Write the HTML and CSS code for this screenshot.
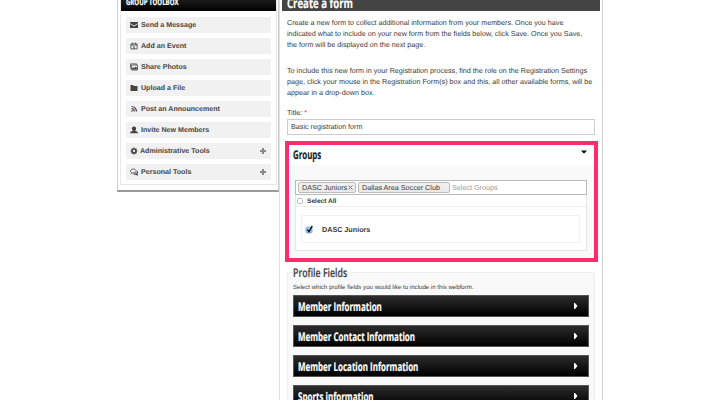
FILE: index.html
```html
<!DOCTYPE html>
<html lang="en">
<head>
<meta charset="utf-8">
<title>Create a form</title>
<link rel="stylesheet" href="styles.css">
</head>
<body>
<div class="page">
  <aside class="toolbox">
    <div class="toolbox-inner">
      <h2 class="toolbox-title"><span>GROUP TOOLBOX</span></h2>
      <ul class="tools">
        <li><svg viewBox="0 0 8 8"><path d="M0 1h8v1.2L4 4.6 0 2.2zM0 3l4 2.5L8 3v4H0z"/></svg><span>Send a Message</span></li>
        <li><svg viewBox="0 0 8 8"><path class="line" d="M.9 1.9h6.2v5H.9zM.9 3h6.2M2.5.6v1.5M5.5.6v1.5M3.3 4.2h.8v2.2M3.3 6.2h1.6"/></svg><span>Add an Event</span></li>
        <li><svg viewBox="0 0 8 8"><path class="line" d="M.4 5.5V.9h6.2v.8M1.4 2h6.2v5H1.4z"/><path d="M2 6.5V5.3l1.3-1 1 .8L5.8 3.6 7.1 5v1.5z"/></svg><span>Share Photos</span></li>
        <li><svg viewBox="0 0 8 8"><path d="M.5 1h2.6l.7 1h3.7v5h-7z"/></svg><span>Upload a File</span></li>
        <li><svg viewBox="0 0 8 8"><path class="thick" d="M1.5 1.5A5 5 0 0 1 6.5 6.5M1.5 3.7A2.8 2.8 0 0 1 4.3 6.5"/><circle cx="2" cy="6" r=".8"/></svg><span>Post an Announcement</span></li>
        <li><svg viewBox="0 0 8 8"><path d="M4 .4c1.600 0 2.200 1 2.100 2.300-.1 1-.5 1.500-.8 1.800v.5l2.300.8.3 1.500H.1l.3-1.500L2.700 5v-.5c-.3-.3-.7-.8-.8-1.800C1.800 1.400 2.400.4 4 .4z"/></svg><span>Invite New Members</span></li>
        <li class="more wide"><svg viewBox="0 0 8 8"><circle class="gear" cx="4" cy="4" r="2"/><path class="thick" d="M4 .6v1M4 6.400v1M.6 4h1M6.400 4h1M1.600 1.600l.7.7M5.700 5.700l.7.7M6.400 1.600l-.7.7M2.300 5.700l-.7.7"/></svg><span>Administrative Tools</span><i class="plus"></i></li>
        <li class="more"><svg viewBox="0 0 8 8"><path class="line" d="M3.300 1C1.500 1 .5 1.900.5 3c0 .7.4 1.200 1 1.600L1.200 5.600l1.500-.7c2 .2 3.500-.6 3.500-1.900C6.200 1.900 5 1 3.300 1z"/><path class="thick" d="M7 3.300c.9.9.5 1.900-.2 2.400l.4 1-1.400-.6c-.9.1-1.600 0-2.200-.4"/></svg><span>Personal Tools</span><i class="plus"></i></li>
      </ul>
    </div>
  </aside>

  <main class="content">
    <h1 class="content-title"><span>Create a form</span></h1>
    <div class="body">
      <p class="intro">Create a new form to collect additional information from your members. Once you have<br>indicated what to include on your new form from the fields below, click Save. Once you Save,<br>the form will be displayed on the next page.</p>
      <p class="intro second">To include this new form in your Registration process, find the role on the Registration Settings<br>page, click your mouse in the Registration Form(s) box and this, all other available forms, will be<br>appear in a drop-down box.</p>
      <label class="field-label">Title: <em>*</em></label>
      <div class="input">Basic registration form</div>

      <section class="groups">
        <div class="groups-head"><h2><span>Groups</span></h2><svg class="caret" viewBox="0 0 6 4"><path d="M0 .4h6L3.600 3.300H2.400z"/></svg></div>
        <div class="groups-body">
          <div class="picker"><span class="tag tag-a">DASC Juniors<svg viewBox="0 0 5 5"><path d="M.5.5l4 4M4.500.5l-4 4"/></svg></span><span class="tag tag-b">Dallas Area Soccer Club</span><span class="placeholder">Select Groups</span></div>
          <div class="list">
            <div class="select-all"><i class="check"></i><span>Select All</span></div>
            <div class="option"><svg class="checked" viewBox="0 0 9 9"><rect x="1" y="2" width="6" height="6" rx="1"/><path d="M2.300 4.500L4 6.700 7.300.9"/></svg><span>DASC Juniors</span></div>
          </div>
        </div>
      </section>

      <section class="profile">
        <h2 class="legend"><span>Profile Fields</span></h2>
        <p class="hint">Select which profile fields you would like to include in this webform.</p>
        <div class="bar"><span>Member Information</span><svg viewBox="0 0 4 6"><path d="M0 0h1l2.500 3L1 6H0z"/></svg></div>
        <div class="bar"><span>Member Contact Information</span><svg viewBox="0 0 4 6"><path d="M0 0h1l2.500 3L1 6H0z"/></svg></div>
        <div class="bar"><span>Member Location Information</span><svg viewBox="0 0 4 6"><path d="M0 0h1l2.500 3L1 6H0z"/></svg></div>
        <div class="bar"><span>Sports information</span><svg viewBox="0 0 4 6"><path d="M0 0h1l2.500 3L1 6H0z"/></svg></div>
      </section>
    </div>
  </main>
</div>
</body>
</html>
```
FILE: styles.css
```css
* { box-sizing: border-box; }
html, body { margin: 0; padding: 0; height: 400px; overflow: hidden; background: #fff; }
body { font: 7.2px "Liberation Sans", Arial, sans-serif; color: #3a3a3a; text-rendering: geometricPrecision; }
h1, h2, p, ul { margin: 0; padding: 0; }
.page { display: flex; align-items: flex-start; height: 400px; padding-left: 117px; overflow: hidden; }

h1 span, h2 span, .bar span {
  display: inline-block;
  font-family: "Open Sans", "Noto Sans", sans-serif;
  font-weight: 700;
  white-space: nowrap;
  transform-origin: 0 50%;
  -webkit-text-stroke: .2px currentColor;
}

.toolbox { width: 162px; height: 192px; padding: 0 2px 5px; border-left: 1px solid #ccc; border-right: 1px solid #ccc; border-bottom: 2px solid #999; }
.toolbox-inner { height: 185px; width: 157px; border: 1px solid #e8e8e8; border-top: 0; }
.toolbox-title { height: 11px; background: linear-gradient(#1c1c1c, #000); color: #fff; font-size: 8.5px; line-height: 11px; padding-left: 5px; }
.toolbox-title span { display: block; line-height: 11px; position: relative; top: -3px; transform: scaleX(.71); }
.tools { list-style: none; padding: 5.5px 5px 0; }
.tools li { display: flex; align-items: center; height: 16px; margin-bottom: 5px; padding-left: 4px; background: #f1f1f1; color: #444; font-weight: 700; font-size: 7.1px; }
.tools svg { width: 8px; height: 8px; margin-right: 3px; fill: #444; }
.tools .wide svg { margin-right: 2px; }
.line { fill: none; stroke: #444; stroke-width: .8; }
.thick { fill: none; stroke: #444; stroke-width: 1.2; }
.gear { fill: none; stroke: #444; stroke-width: 1.7; }
.plus { margin-left: auto; margin-right: 5px; width: 6px; height: 6px; background: linear-gradient(#888, #888) 50% 50% / 6px 2px no-repeat, linear-gradient(#888, #888) 50% 50% / 2px 6px no-repeat; }

.content { width: 324px; height: 400px; border-right: 1px solid #ccc; border-left: 1px solid #e0e0e0; padding: 0 2px; }
.content-title { height: 11px; width: 318px; background: #444; color: #fff; padding-left: 5px; }
.content-title span { font-size: 13.5px; line-height: 14px; position: relative; top: -4px; display: block; transform: scaleX(.71); }
.body { padding-left: 5px; width: 313px; }
.intro { padding-top: 5.5px; line-height: 11px; white-space: nowrap; }
.second { padding-top: 15.500px; }
.field-label { display: block; margin-top: 9px; height: 12px; line-height: 11px; }
.field-label em { color: #f33; font-style: normal; }
.input { height: 16px; border: 1px solid #ccc; padding-left: 3px; line-height: 14px; }

.groups { margin: 6px -3px 0 -2px; height: 121px; border: 4px solid #ff2c6b; display: flex; flex-direction: column; }
.groups-head { height: 20px; display: flex; justify-content: space-between; padding: 0 7px 0 4px; }
.groups h2 { font-size: 12px; line-height: 19px; color: #222; }
.groups h2 span { transform: scaleX(.655); }
.caret { width: 6px; height: 4px; margin-top: 5px; fill: #111; }
.groups-body { flex: 1; background: #f9f9f9; padding: 15px 7px 0 6px; }
.picker { height: 15px; background: #fff; border: 1px solid #bbb; display: flex; align-items: center; padding-left: 2px; }
.tag { height: 11px; border: 1px solid #bbb; border-radius: 2px; background: linear-gradient(#f2f2f2, #e8e8e8); display: flex; align-items: center; justify-content: space-between; padding: 0 2px 0 3px; margin-right: 2px; white-space: nowrap; }
.tag-a { width: 58px; }
.tag-b { width: 92px; }
.tag svg { width: 5px; height: 5px; fill: none; stroke: #777; stroke-width: 1; }
.placeholder { color: #999; }
.list { height: 56px; background: #fff; border: 1px solid #e5e5e5; border-top: 0; }
.select-all { height: 12px; padding-top: 1px; border-bottom: 1px solid #eee; display: flex; align-items: center; font-size: 6.6px; font-weight: 700; }
.check { width: 6px; height: 6px; border: 1px solid #bbb; border-radius: 1.500px; margin: 0 4px 0 1px; }
.option { margin: 8px 6px 0 5px; height: 28px; border: 1px solid #f1f1f1; display: flex; align-items: center; font-weight: 700; }
.checked { width: 9px; height: 9px; margin: 0 8px 0 3px; fill: #a9d0f5; stroke: #5b8fc7; stroke-width: .6; }
.checked path { fill: none; stroke: #111; stroke-width: 1.400; }

.profile { margin-top: 10px; height: 160px; background: #f9f9f9; border: 1px solid #eee; border-radius: 2px; padding: 0 5px; width: 308px; }
.legend { height: 10px; font-size: 12px; line-height: 14px; margin-top: -7px; color: #444; }
.legend span { line-height: 14px; transform: scaleX(.73); background: linear-gradient(#fff 52%, #f9f9f9 52%); font-weight: 600; }
.hint { margin-top: 7px; height: 12px; line-height: 9px; font-size: 6.1px; white-space: nowrap; }
.bar { height: 22px; width: 296px; margin-bottom: 8px; background: linear-gradient(#2c2c2c, #000); border: 1px solid #555; color: #fff; display: flex; align-items: center; justify-content: space-between; padding: 0 10px 0 4px; }
.bar span { font-size: 12px; line-height: 20px; position: relative; top: .5px; transform: scaleX(.665); }
.bar svg { width: 4px; height: 6px; fill: #fff; }
```
